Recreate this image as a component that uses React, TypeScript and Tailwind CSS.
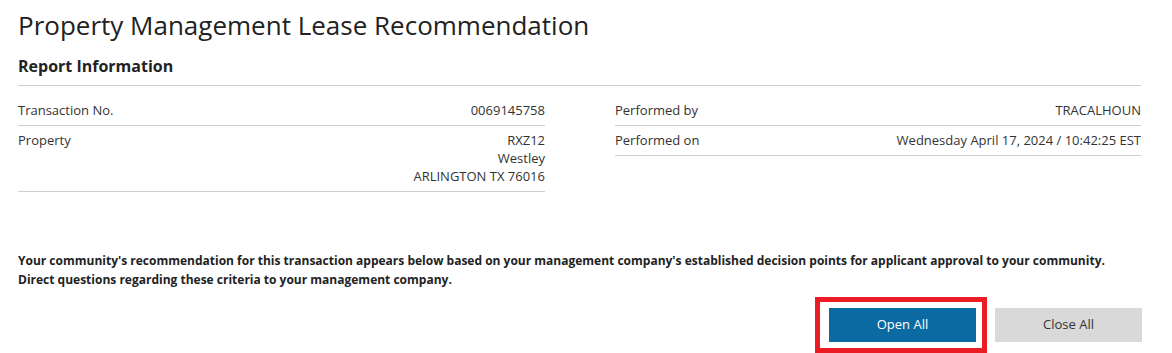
import React from "react";

const Row = ({ label, children }: { label: string; children: React.ReactNode }) => (
  <div className="flex justify-between border-b border-[#cfcfcf] pt-[5px] pb-[6px] leading-[18px]">
    <span>{label}</span>
    <div className="text-right">{children}</div>
  </div>
);

export default function App() {
  return (
    <div className="w-[1172px] h-[353px] bg-white px-[18px] text-[#333] font-['Open_Sans',sans-serif] text-[13px] overflow-hidden">
      <h1 className="text-[26px] leading-[34px] pt-[8px] text-[#222] font-normal">
        Property Management Lease Recommendation
      </h1>
      <h2 className="text-[16px] font-bold leading-[22px] mt-[13px] pb-[8px] border-b border-[#cfcfcf] mr-[13px] text-[#222]">
        Report Information
      </h2>
      <div className="flex justify-between mr-[13px] mt-[10px]">
        <div className="w-[527px]">
          <Row label="Transaction No.">0069145758</Row>
          <Row label="Property">
            <div>RXZ12</div>
            <div>Westley</div>
            <div>ARLINGTON TX 76016</div>
          </Row>
        </div>
        <div className="w-[526px]">
          <Row label="Performed by">TRACALHOUN</Row>
          <Row label="Performed on">Wednesday April 17, 2024 / 10:42:25 EST</Row>
        </div>
      </div>
      <p className="mt-[59px] font-bold text-[12px] leading-[19px] text-[#222]">
        Your community's recommendation for this transaction appears below based on your management company's established decision points for applicant approval to your community.
        <br />
        Direct questions regarding these criteria to your management company.
      </p>
      <div className="flex justify-end items-center gap-[8px] mr-[12px] mt-[8px]">
        <div className="border-[5px] border-[#ec1c24] pt-[6px] pb-[6px] pl-[9px] pr-[6px]">
          <button className="block w-[147px] h-[34px] bg-[#0a6aa1] text-white text-[13px]">Open All</button>
        </div>
        <button className="w-[147px] h-[34px] bg-[#d9d9d9] text-[#333] text-[13px]">Close All</button>
      </div>
    </div>
  );
}
